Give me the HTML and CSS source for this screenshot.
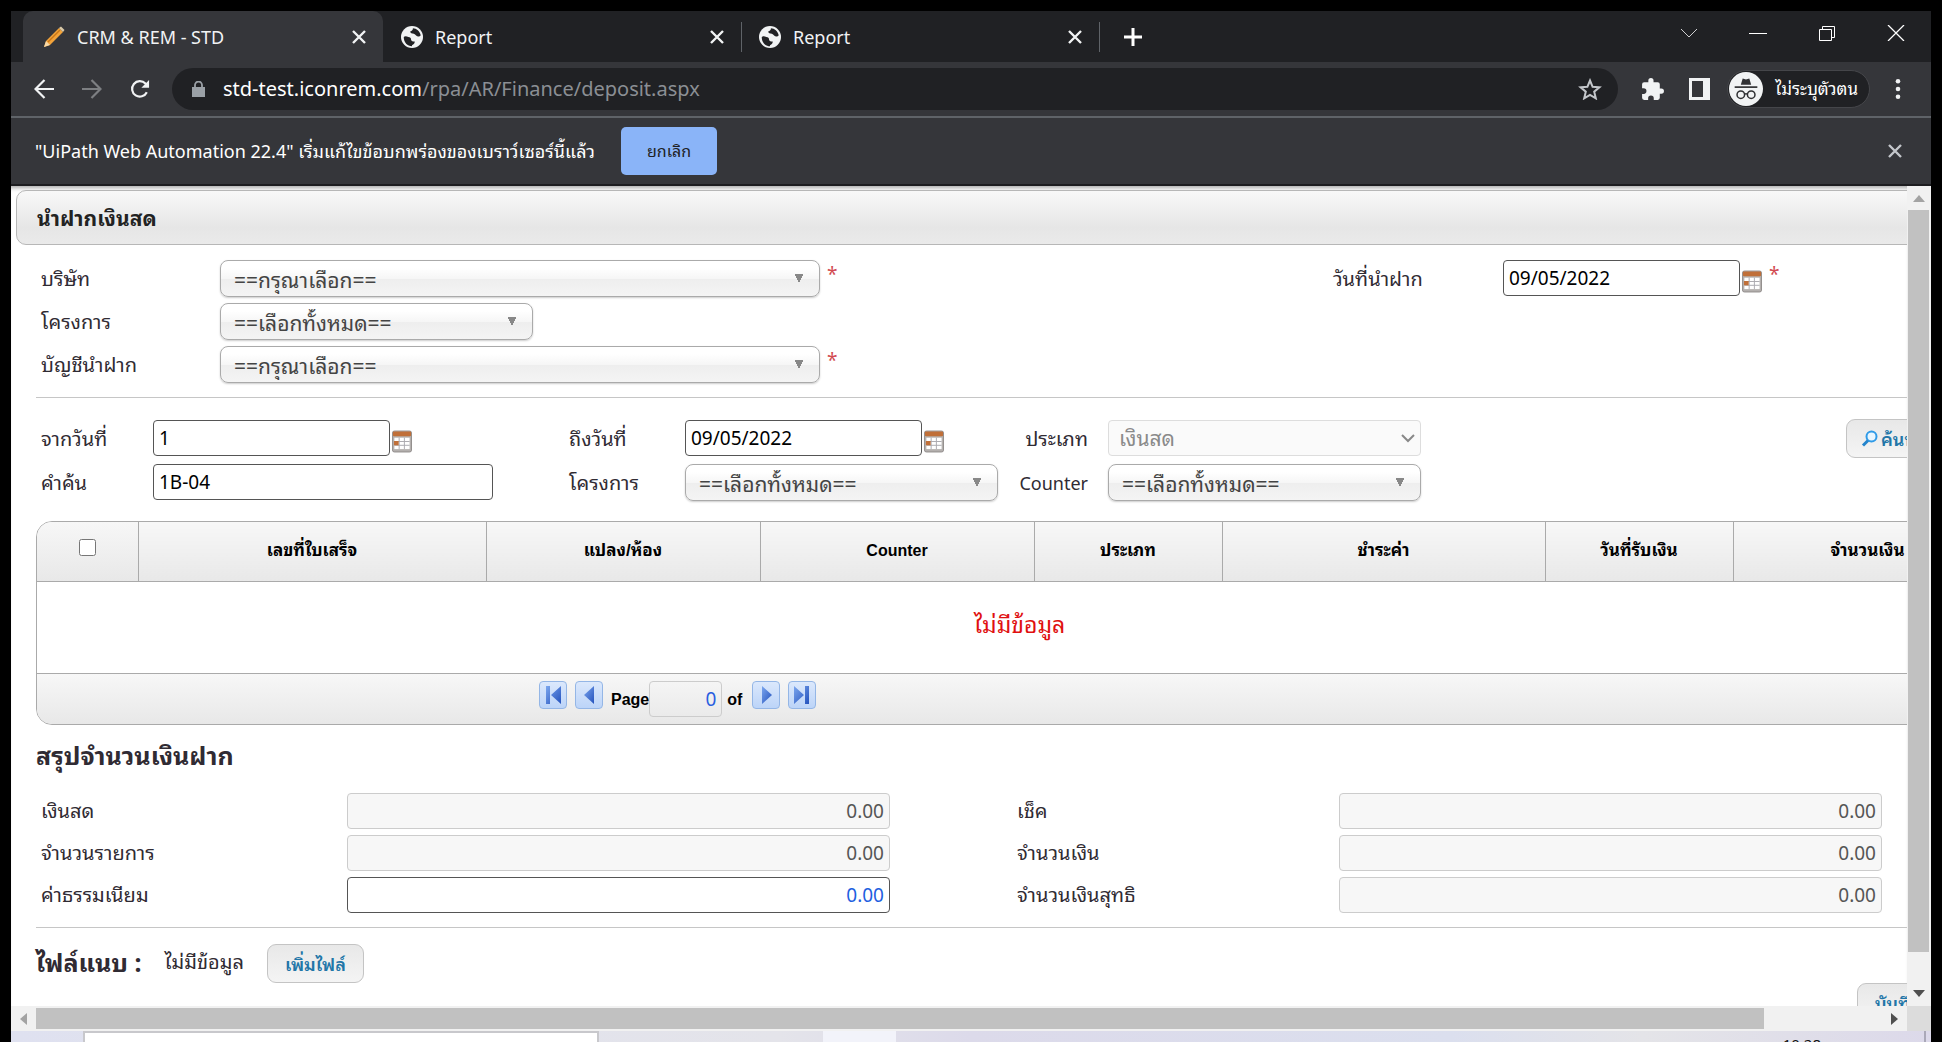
FILE: index.html
```html
<!DOCTYPE html>
<html lang="th">
<head>
<meta charset="utf-8">
<title>CRM &amp; REM - STD</title>
<link rel="stylesheet" href="styles.css">
</head>
<body>
<svg width="0" height="0" class="defs" aria-hidden="true">
  <symbol id="i-close" viewBox="0 0 16 16"><path d="M2 2 14 14M14 2 2 14" fill="none" stroke="currentColor" stroke-width="2.4"/></symbol>
  <symbol id="i-globe" viewBox="0 0 24 24"><circle cx="12" cy="12" r="12" fill="#f1f3f4"/><path d="M3 12c1-1 3-1 5 0 2 .5 3 1 3 3 0 1.500 2 2 4 2 0 2-1 3-3 4v1c-5 0-9-4-9-10zM13 2.500c0 2-1 3-3 3.500 0 2 2 2 4 2.500 2 1 3 3 5 3 1.500 0 2-1 2.500-1.500C20.500 6 17 2.500 13 2.500z" fill="#202124"/></symbol>
  <symbol id="i-cal" viewBox="0 0 21 23"><rect x=".5" y=".5" width="20" height="22" rx="2" fill="#b4b0ae" stroke="#8f8b8a"/><rect x="1" y="1" width="19" height="5" rx="1" fill="#c06f38"/><path d="M2.500 7.500h16v12h-16z" fill="#fff"/><path d="M7.500 7.500v12M13 7.500v12M2.500 11.500h16M2.500 15.500h16" stroke="#aaa9ae"/><path d="M2 11h5v4.500H2z" fill="#c06f38"/></symbol>
  <linearGradient id="g-arrow" x1="0" y1="0" x2="1" y2="1"><stop offset="0" stop-color="#7ba6ee"/><stop offset="1" stop-color="#2452bd"/></linearGradient>
</svg>
<div class="window">
  <header>
    <div class="tabs" role="tablist">
      <div class="tab active">
        <svg class="fav" viewBox="0 0 22 22"><path d="M1 21l2-6L16 2l4 4L7 19z" fill="#f2a33a"/><path d="M1 21l2-6 4 4z" fill="#f7d9a8"/><path d="M5 16 17 4" stroke="#c97716" stroke-width="1.500"/><path d="m16 2 2-1.500 3.500 3.500L20 6z" fill="#d9c9a8"/></svg>
        <span>CRM &amp; REM - STD</span><button class="x" aria-label="close tab"><svg><use href="#i-close"/></svg></button>
      </div>
      <div class="tab"><svg class="fav"><use href="#i-globe"/></svg><span>Report</span><button class="x" aria-label="close tab"><svg><use href="#i-close"/></svg></button></div>
      <div class="tab"><svg class="fav"><use href="#i-globe"/></svg><span>Report</span><button class="x" aria-label="close tab"><svg><use href="#i-close"/></svg></button></div>
      <button class="plus" aria-label="new tab"><svg viewBox="0 0 18 18"><path d="M9 0v18M0 9h18" stroke="#fff" stroke-width="3"/></svg></button>
      <div class="wincontrols">
        <button aria-label="tab search"><svg viewBox="0 0 18 16"><path d="m1 4 8 8 8-8" fill="none" stroke="#cfcfd1"/></svg></button>
        <button aria-label="minimize"><svg viewBox="0 0 18 16"><path d="M0 8.500h18" stroke="#fff"/></svg></button>
        <button aria-label="restore"><svg viewBox="0 0 18 16"><path d="M1.500 4.500h12v11h-12zM4.500 4V1.500h12v11H14" fill="none" stroke="#fff"/></svg></button>
        <button aria-label="close"><svg viewBox="0 0 18 16"><path d="m1 0 16 16M17 0 1 16" stroke="#fff" stroke-width="1.300"/></svg></button>
      </div>
    </div>
    <div class="toolbar">
      <button aria-label="back"><svg viewBox="0 0 20 20"><path d="M20 10H2M10.500 1 1.500 10l9 9" fill="none" stroke="#f1f3f4" stroke-width="2.200"/></svg></button>
      <button aria-label="forward"><svg viewBox="0 0 20 20"><path d="M0 10h18M9.500 1l9 9-9 9" fill="none" stroke="#7d7f82" stroke-width="2.200"/></svg></button>
      <button aria-label="reload"><svg viewBox="0 0 22 20"><path d="M18.500 13.500a8.500 8.500 0 1 1-1.500-9.500l2 2" fill="none" stroke="#f1f3f4" stroke-width="2.400"/><path d="M21 0v8.500h-8.500z" fill="#f1f3f4"/></svg></button>
      <div class="omnibox">
        <svg class="lock" viewBox="0 0 13 16"><path d="M0 6h13v10H0z" fill="#9aa0a6"/><path d="M3 7V4a3.500 3.500 0 0 1 7 0v3" fill="none" stroke="#9aa0a6" stroke-width="1.800"/></svg>
        <span class="url">std-test.iconrem.com<span>/rpa/AR/Finance/deposit.aspx</span></span>
        <svg class="star" viewBox="0 0 24 22"><path d="m12 2.500 2.600 6.300 6.800.5-5.200 4.400 1.600 6.600L12 16.800l-5.800 3.500 1.600-6.600-5.200-4.400 6.800-.5z" fill="none" stroke="#c4c7cb" stroke-width="2"/></svg>
      </div>
      <svg class="tool" viewBox="0 0 24 24"><path d="M20.500 11H19V7a2 2 0 0 0-2-2h-4V3.500a2.500 2.500 0 0 0-5 0V5H4a2 2 0 0 0-2 2v3.800h1.500a2.700 2.700 0 0 1 0 5.400H2V20a2 2 0 0 0 2 2h3.800v-1.500a2.700 2.700 0 0 1 5.400 0V22H17a2 2 0 0 0 2-2v-4h1.500a2.500 2.500 0 0 0 0-5z" fill="#f1f3f4"/></svg>
      <svg class="tool side" viewBox="0 0 21 22"><path d="M0 0h21v22H0z" fill="#f1f3f4"/><path d="M3 3h11v16H3z" fill="#35363a"/></svg>
      <button class="profile"><svg viewBox="0 0 36 36"><circle cx="18" cy="18" r="18" fill="#f1f3f4"/><path d="M12.500 13.500 14.500 7l3.500 1 3.500-1 2 6.500z" fill="#303134"/><path d="M6 16h24" stroke="#303134" stroke-width="1.800"/><circle cx="12.500" cy="24" r="4" fill="none" stroke="#303134" stroke-width="1.600"/><circle cx="23.500" cy="24" r="4" fill="none" stroke="#303134" stroke-width="1.600"/><path d="M16.500 23.500q1.500-1 3 0" fill="none" stroke="#303134" stroke-width="1.600"/></svg><span>ไม่ระบุตัวตน</span></button>
      <button class="dots" aria-label="menu"><svg viewBox="0 0 6 20"><circle cx="3" cy="2.300" r="2.300"/><circle cx="3" cy="10" r="2.300"/><circle cx="3" cy="17.700" r="2.300"/></svg></button>
    </div>
    <div class="infobar"><span>"UiPath Web Automation 22.4" เริ่มแก้ไขข้อบกพร่องของเบราว์เซอร์นี้แล้ว</span><button class="cancel">ยกเลิก</button><button class="x" aria-label="dismiss"><svg><use href="#i-close"/></svg></button></div>
  </header>
  <div class="view">
    <div class="clip">
      <main class="page">
        <h1>นำฝากเงินสด</h1>
        <div class="body">
          <form class="deposit">
            <label for="company">บริษัท</label>
            <div class="field"><select id="company" class="wide"><option>==กรุณาเลือก==</option></select><span class="req">*</span></div>
            <label for="depdate">วันที่นำฝาก</label>
            <div class="field"><input id="depdate" class="date" value="09/05/2022"><svg class="cal"><use href="#i-cal"/></svg><span class="req">*</span></div>
            <label for="project">โครงการ</label>
            <div class="field rest"><select id="project"><option>==เลือกทั้งหมด==</option></select></div>
            <label for="account">บัญชีนำฝาก</label>
            <div class="field rest"><select id="account" class="wide"><option>==กรุณาเลือก==</option></select><span class="req">*</span></div>
          </form>
          <hr>
          <form class="search">
            <label for="from">จากวันที่</label>
            <div class="field"><input id="from" class="date" value="1"><svg class="cal"><use href="#i-cal"/></svg></div>
            <label for="to">ถึงวันที่</label>
            <div class="field"><input id="to" class="date" value="09/05/2022"><svg class="cal"><use href="#i-cal"/></svg></div>
            <label for="type" class="r">ประเภท</label>
            <div class="field off"><select id="type" disabled><option>เงินสด</option></select><svg class="chev" viewBox="0 0 14 9"><path d="m1 1 6 6 6-6" fill="none" stroke="#888" stroke-width="2"/></svg></div>
            <button type="button" class="btn find"><svg viewBox="0 0 17 17"><circle cx="10.500" cy="6.500" r="5" fill="#e8f6ff" stroke="#2f9be8" stroke-width="2"/><path d="m7 10.500-5 5" stroke="#2484cc" stroke-width="3"/></svg>ค้นหา</button>
            <label for="word">คำค้น</label>
            <div class="field"><input id="word" class="word" value="1B-04"></div>
            <label for="project2">โครงการ</label>
            <div class="field"><select id="project2"><option>==เลือกทั้งหมด==</option></select></div>
            <label for="counter" class="r en">Counter</label>
            <div class="field"><select id="counter"><option>==เลือกทั้งหมด==</option></select></div>
          </form>
          <div class="grid">
            <table>
              <colgroup><col class="c1"><col class="c2"><col class="c3"><col class="c3"><col class="c4"><col class="c5"><col class="c4"><col></colgroup>
              <thead><tr><th><input type="checkbox" aria-label="เลือกทั้งหมด"></th><th>เลขที่ใบเสร็จ</th><th>แปลง/ห้อง</th><th class="en">Counter</th><th>ประเภท</th><th>ชำระค่า</th><th>วันที่รับเงิน</th><th>จำนวนเงิน</th></tr></thead>
              <tbody><tr><td colspan="8">ไม่มีข้อมูล</td></tr></tbody>
            </table>
            <div class="pager">
              <button aria-label="first"><svg viewBox="0 0 20 20"><path d="M3 1h4v18H3zM18 1v18L8 10z"/></svg></button>
              <button aria-label="previous"><svg viewBox="0 0 20 20"><path d="M15 1v18L5 10z"/></svg></button>
              <label for="pg">Page</label><input id="pg" value="0"><span>of</span>
              <button aria-label="next"><svg viewBox="0 0 20 20"><path d="M6 1v18l10-9z"/></svg></button>
              <button aria-label="last"><svg viewBox="0 0 20 20"><path d="M13 1h4v18h-4zM2 1v18l10-9z"/></svg></button>
            </div>
          </div>
          <h2>สรุปจำนวนเงินฝาก</h2>
          <form class="sum">
            <label for="s1">เงินสด</label><input id="s1" value="0.00" disabled>
            <label for="s2">เช็ค</label><input id="s2" value="0.00" disabled>
            <label for="s3">จำนวนรายการ</label><input id="s3" value="0.00" disabled>
            <label for="s4">จำนวนเงิน</label><input id="s4" value="0.00" disabled>
            <label for="s5">ค่าธรรมเนียม</label><input id="s5" value="0.00">
            <label for="s6">จำนวนเงินสุทธิ</label><input id="s6" value="0.00" disabled>
          </form>
          <hr>
          <div class="files"><h2>ไฟล์แนบ :</h2><span>ไม่มีข้อมูล</span><button class="btn">เพิ่มไฟล์</button></div>
          <div class="actions"><button class="btn">บันทึก</button></div>
        </div>
      </main>
    </div>
    <div class="vbar"><svg viewBox="0 0 12 7"><path d="M0 7h12L6 0z" fill="#a3a3a3"/></svg><i></i><svg viewBox="0 0 12 7"><path d="M0 0h12L6 7z" fill="#505050"/></svg></div>
    <div class="hbar"><svg viewBox="0 0 7 12"><path d="M7 0v12L0 6z" fill="#a3a3a3"/></svg><i></i><svg viewBox="0 0 7 12"><path d="M0 0v12l7-6z" fill="#505050"/></svg></div>
    <div class="corner"></div>
  </div>
  <footer><div class="tasksearch"></div><div class="taskactive"></div><span class="clock">10:28</span></footer>
</div>
</body>
</html>
```
FILE: styles.css
```css
* { box-sizing: border-box; }
body { margin: 0; background: #000; font-family: "Noto Sans", "Noto Sans Thai Looped", Loma, Waree, "Noto Sans Thai", sans-serif; font-size: 20px; line-height: 28px; color: #302b33; }
button { border: 0; padding: 0; background: none; font: inherit; color: inherit; display: flex; align-items: center; justify-content: center; flex: none; }
input, select { font: inherit; color: #000; }
svg { display: block; flex: none; }
.defs { position: absolute; }
.window { height: 100vh; padding: 11px 11px 0; display: flex; flex-direction: column; overflow: hidden; }
header { flex: none; background: #35363a; color: #fff; }

.tabs { display: flex; align-items: stretch; height: 51px; background: #202124; padding-left: 12px; }
.tab { display: flex; align-items: center; width: 358px; padding: 0 16px 0 18px; gap: 12px; font-size: 18px; color: #f1f3f4; }
.tab.active { width: 360px; background: #35363a; border-radius: 10px 10px 0 0; padding-left: 20px; }
.tab span { flex: 1; }
.fav { width: 22px; height: 22px; }
.x svg { width: 16px; height: 16px; }
.plus { width: 67px; }
.plus svg { width: 18px; height: 18px; }
.tab + .tab + .tab, .plus { background: linear-gradient(#5f6368, #5f6368) 0 11px / 1px 30px no-repeat; }
.wincontrols { margin-left: auto; display: flex; padding: 0 26px 8px 0; gap: 51px; }
.wincontrols svg { width: 18px; height: 16px; }

.toolbar { display: flex; align-items: center; height: 56px; padding: 0 30px 0 23px; border-bottom: 2px solid #5f6368; }
.toolbar > button svg { width: 20px; height: 20px; }
.toolbar > button { margin-right: 28px; }
.toolbar > button:nth-child(3) { margin-right: 22px; }
.omnibox { flex: 1; display: flex; align-items: center; height: 42px; border-radius: 21px; background: #202124; padding: 0 16px 0 20px; }
.lock { width: 13px; height: 16px; margin-right: 18px; }
.url { flex: 1; font-size: 20px; color: #fff; }
.url span { color: #8b8f94; }
.star { width: 24px; height: 22px; }
.tool { width: 25px; height: 25px; margin-left: 22px; }
.tool.side { width: 21px; height: 22px; margin-left: 24px; }
.toolbar .profile { margin: 0 25px 0 17px; height: 38px; border-radius: 19px; background: #202124; border: 1px solid #45464a; padding-right: 11px; gap: 12px; font-size: 17px; }
.toolbar .profile svg { width: 34px; height: 34px; margin-left: 1px; }
.toolbar .dots { margin: 0; }
.toolbar .dots svg { width: 6px; height: 20px; fill: #f1f3f4; }

.infobar { display: flex; align-items: center; height: 68px; padding: 0 28px 0 24px; border-bottom: 2px solid #1d1d20; font-size: 18px; }
.cancel { margin-left: 26px; width: 96px; height: 48px; border-radius: 5px; background: #8ab4f8; color: #202124; font-size: 16px; }
.infobar .x { margin-left: auto; color: #c4c7cb; }

.view { flex: 1; min-height: 0; display: grid; grid-template: minmax(0, 1fr) 25px / minmax(0, 1fr) 24px; background: #fff; }
.clip { overflow: hidden; box-shadow: inset 0 5px 4px -3px #aaa; }
.page { width: 107%; padding: 4px 0 0 5px; }
h1 { margin: 0; height: 55px; line-height: 55px; padding-left: 20px; border: 1px solid #b7b7b7; border-radius: 10px; background: linear-gradient(#f8f8f8, #e6e6e6 70%, #eaeaea); font-size: 21px; color: #222; }
.body { padding: 15px 36px 0 20px; }
hr { border: 0; border-top: 1px solid #c6c6c6; margin: 0; }
.field { display: flex; align-items: flex-start; height: 37px; }
label { padding-left: 5px; white-space: nowrap; }
input { height: 36px; border: 1px solid #555; border-radius: 4px; padding: 0 5px; font-size: 19px; background: #fff; }
select { appearance: none; width: 313px; height: 37px; border: 1px solid #aaa; border-radius: 8px; padding: 2px 13px 0; color: #444; box-shadow: 0 1px 2px #ccc; font-size: 21px;
  background: conic-gradient(from -27deg at 50% 100%, #888 54deg, transparent 0) right 15px center / 10px 9px no-repeat, linear-gradient(#fff 20%, #f6f6f6 50%, #eee 52%, #f4f4f4); }
select.wide { width: 600px; }
.off { display: grid; justify-content: start; }
.off > * { grid-area: 1 / 1; }
.off select { height: 36px; border-color: #ddd; border-radius: 4px; color: #8a8a8a; opacity: 1; box-shadow: none; padding: 0 10px; background: #fafafa; }
.chev { width: 14px; height: 9px; justify-self: end; align-self: center; margin-right: 6px; }
.date { width: 237px; }
.word { width: 340px; }
.cal { width: 20px; height: 23px; margin: 10px 0 0 2px; }
.req { color: #d24b52; margin-left: 7px; font-size: 19px; }

.deposit { display: grid; grid-template-columns: 184px 1108px 175px auto; justify-content: start; align-items: center; row-gap: 6px; margin-bottom: 14px; }
.rest { grid-column: 2 / -1; }
.search { display: grid; grid-template-columns: 117px 411px 121px 314px 109px 738px auto; justify-content: start; align-items: center; row-gap: 7px; padding: 22px 0 20px; }
.r { text-align: right; padding-right: 20px; }
label.en { font-size: 18px; }

.btn { height: 39px; border: 1px solid #c4c4c4; border-radius: 9px; background: linear-gradient(#e8e8e8, #f4f4f4); color: #2276a8; font-weight: 600; font-size: 18px; padding: 0 17px; }
.find { gap: 3px; padding: 0 14px; margin: -1px -20px -1px 0; }
.find svg { width: 17px; height: 17px; }

.grid { border: 1px solid #aaa; border-radius: 16px; overflow: hidden; }
table { width: 100%; border-collapse: collapse; table-layout: fixed; }
.c1 { width: 101px; } .c2 { width: 348px; } .c3 { width: 274px; } .c4 { width: 188px; } .c5 { width: 323px; }
th { height: 59px; padding: 0; background: linear-gradient(#f7f7f7, #e8e8e8); border-right: 1px solid #aaa; border-bottom: 1px solid #aaa; font: bold 17px/24px "Liberation Sans", "Noto Sans Thai Looped", Loma, "Noto Sans Thai", sans-serif; color: #000; }
th.en { font-size: 16px; }
th input { width: 17px; height: 17px; margin: 0; }
td { height: 92px; padding: 0 0 6px; text-align: center; color: #e01010; font-size: 23px; }
.pager { display: flex; height: 51px; border-top: 1px solid #aaa; background: linear-gradient(#f7f7f7, #e8e8e8); padding: 7px 0 0 502px; font: bold 16px/38px "Liberation Sans", sans-serif; color: #000; }
.pager button { width: 28px; height: 28px; border: 1px solid #94b6e6; border-radius: 4px; background: linear-gradient(#dbe8fc, #bcd4f8); margin-right: 8px; }
.pager svg { width: 20px; height: 20px; fill: url(#g-arrow); }
.pager label { padding: 0; }
.pager input { width: 73px; border-color: #ccc; background: none; color: #2a5fe0; font: 19px "Noto Sans", sans-serif; text-align: right; }
.pager span { margin: 0 10px 0 5px; }

h2 { font-size: 25px; margin: 0; color: #302b33; line-height: 32px; }
.grid + h2 { margin: 14px 0 22px; }
.sum { display: grid; grid-template-columns: 311px 543px 449px 543px; row-gap: 6px; align-items: center; margin-bottom: 14px; }
.sum input { text-align: right; color: #1f5fe0; }
.sum input:disabled { color: #555; background: #f7f7f7; border-color: #ccc; }
.sum label:nth-of-type(even) { padding-left: 127px; }
.files { display: flex; align-items: center; padding-top: 16px; }
.files h2, .files span { padding-bottom: 4px; }
.files span { margin: 0 23px 0 23px; }
.actions { display: flex; justify-content: flex-end; padding-right: 64px; }

.vbar { background: #f1f1f1; display: flex; flex-direction: column; align-items: center; padding: 9px 2px 9px 1px; }
.vbar svg { width: 12px; height: 7px; }
.vbar i { width: 21px; height: 742px; background: #c1c1c1; margin: 8px 0 auto; }
.hbar { background: #f1f1f1; display: flex; align-items: center; padding: 0 9px; }
.hbar svg { width: 7px; height: 12px; }
.hbar i { width: 92%; height: 21px; background: #c1c1c1; margin: 0 auto 0 9px; }
.corner { background: #dcdcdc; }

footer { flex: none; display: flex; height: 11px; padding-left: 72px; overflow: hidden; background: linear-gradient(90deg, #dfe1f0, #e4e4ea 40%, #dcdaea 50%, #dbdfee 75%, #e4e4e8 85%, #dcd9ea); }
.tasksearch { width: 516px; background: #fff; border: 2px solid #c8c8cc; border-bottom: 0; }
.taskactive { width: 73px; margin-left: 224px; background: #f2f3fa; }
.clock { margin-left: auto; padding: 6px 103px 0 0; margin-right: 5px; border-right: 2px solid #aaa8b8; font-size: 15px; line-height: 15px; color: #111; }
```
